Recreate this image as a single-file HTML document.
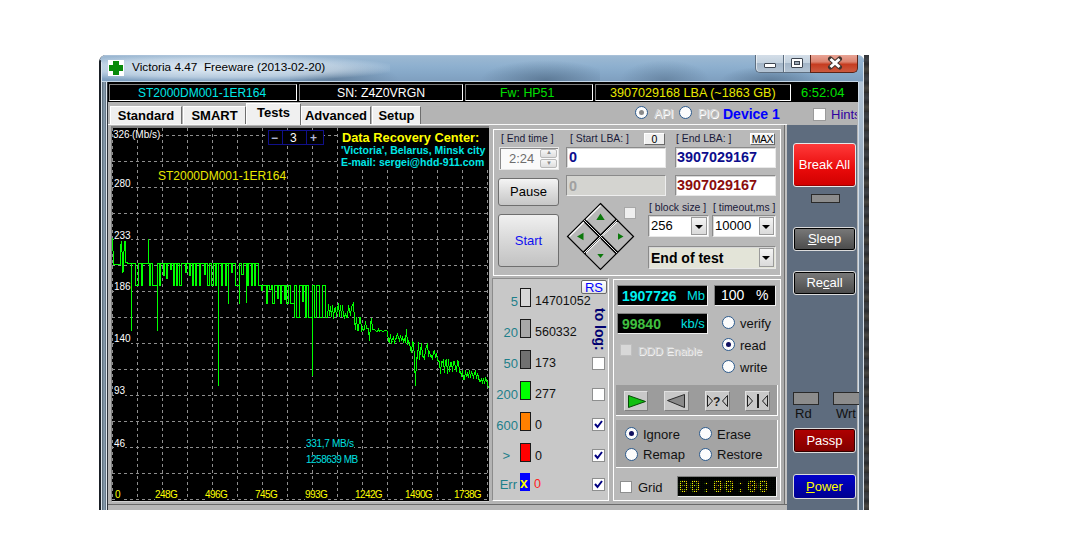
<!DOCTYPE html>
<html><head><meta charset="utf-8">
<style>
*{box-sizing:border-box}
html,body{margin:0;padding:0}
body{width:1069px;height:556px;overflow:hidden;background:#fff;position:relative;font-family:"Liberation Sans",sans-serif}
.a{position:absolute}
.t{position:absolute;white-space:pre;line-height:1}
/* window frame */
#frame{left:99px;top:55px;width:765px;height:455px;background:linear-gradient(90deg,#c8d8e6,#a0bad2);border-radius:7px 7px 0 0;border-left:1px solid #1d2630}
#title{left:100px;top:55px;width:764px;height:26px;background:linear-gradient(180deg,#9cb8d2 0%,#8eb0cf 40%,#86a8c8 70%,#7f9fbf 100%);border-radius:6px 6px 0 0;border-top:1px solid #a8c0d8}
#client{left:108px;top:82px;width:750px;height:428px;background:#b4b4b4}
.box3d{border-top:1px solid #808080;border-left:1px solid #808080;border-right:1px solid #fff;border-bottom:1px solid #fff}
.sunk{border-top:1px solid #808080;border-left:1px solid #808080;border-right:1px solid #fff;border-bottom:1px solid #fff}
.raised{border-top:1px solid #fff;border-left:1px solid #fff;border-right:1px solid #808080;border-bottom:1px solid #808080}
.tab{position:absolute;top:106px;height:18px;background:#efefef;border-top:1px solid #fff;border-left:1px solid #fff;border-right:1px solid #6e6e6e;font:bold 13px "Liberation Sans",sans-serif;color:#000;text-align:center;line-height:17px}
.btn{position:absolute;background:linear-gradient(180deg,#f2f2f2,#d9d9d9 50%,#c8c8c8);border:1px solid #707070;border-radius:3px;text-align:center;font-family:"Liberation Sans",sans-serif}
.inp{position:absolute;background:#fff;border-top:1px solid #8a8a8a;border-left:1px solid #8a8a8a;border-right:1px solid #e8e8e8;border-bottom:1px solid #e8e8e8;box-shadow:inset 1px 1px 0 #d8d8d8}
.radio{position:absolute;width:13px;height:13px;border-radius:50%;border:1.5px solid #2c5a8c;background:#fcfcfc}
.chk{position:absolute;width:13px;height:13px;background:#fff;border:1px solid #8e8f8f}
.sw{position:absolute;width:11px;height:19px;border:1px solid #1a1a1a}
.lbl{position:absolute;white-space:pre;line-height:1;font-size:13px;color:#1e7f8a;text-align:right}
.val{position:absolute;white-space:pre;line-height:1;font-size:12.5px;color:#111}
</style></head><body>

<div id="frame" class="a"></div>
<div id="title" class="a"></div>
<!-- desktop smudges on glass -->
<div class="a" style="left:290px;top:62px;width:110px;height:20px;background:radial-gradient(ellipse at 40% 90%,rgba(70,95,120,.45),rgba(70,95,120,0) 70%)"></div>
<div class="a" style="left:480px;top:60px;width:120px;height:22px;background:radial-gradient(ellipse at 55% 90%,rgba(60,85,110,.5),rgba(60,85,110,0) 70%)"></div>
<div class="a" style="left:620px;top:60px;width:90px;height:22px;background:radial-gradient(ellipse at 50% 90%,rgba(70,95,120,.4),rgba(70,95,120,0) 70%)"></div>
<div class="a" style="left:720px;top:66px;width:100px;height:16px;background:radial-gradient(ellipse at 50% 90%,rgba(60,85,110,.45),rgba(60,85,110,0) 70%)"></div>
<div class="a" style="left:100px;top:55px;width:290px;height:26px;background:radial-gradient(ellipse at 40% 50%,rgba(235,242,248,.9),rgba(235,242,248,.5) 50%,rgba(235,242,248,0) 75%)"></div>
<!-- right frame -->
<div class="a" style="left:864px;top:55px;width:5px;height:455px;background:repeating-linear-gradient(180deg,#33363a 0,#404347 5px,#2a2c2f 9px,#4a4843 14px,#2e2e2e 19px)"></div>
<div class="a" style="left:857px;top:82px;width:1px;height:428px;background:#4a5868"></div>
<div class="a" style="left:858px;top:82px;width:1px;height:428px;background:#d0dce8"></div>
<div class="a" style="left:859px;top:82px;width:4px;height:428px;background:linear-gradient(180deg,#b4c6d8 0%,#8a9eb2 30%,#5e7084 55%,#5a6c7e 100%)"></div>
<div class="a" style="left:863px;top:62px;width:1px;height:448px;background:#d8e2ec"></div>
<!-- left frame inner -->
<div class="a" style="left:99px;top:60px;width:2px;height:450px;background:#1a1f26;border-radius:3px 0 0 0"></div>
<div class="a" style="left:101px;top:62px;width:1px;height:448px;background:#dde6ee"></div>
<div class="a" style="left:102px;top:82px;width:4px;height:428px;background:linear-gradient(90deg,#52626f,#8ea3b6 55%,#5a6b7a)"></div>
<div class="a" style="left:106px;top:82px;width:1px;height:428px;background:#e2e9f0"></div>
<div class="a" style="left:107px;top:81px;width:1px;height:429px;background:#2b3038"></div>
<div class="a" style="left:102px;top:81px;width:756px;height:1px;background:#c4d6e6"></div>

<!-- icon -->
<div class="a" style="left:108px;top:60px;width:16px;height:16px;background:#fff"></div>
<div class="a" style="left:113px;top:61px;width:6px;height:14px;background:#0a8a0a"></div>
<div class="a" style="left:109px;top:65px;width:14px;height:6px;background:#0a8a0a"></div>
<div class="a" style="left:113px;top:65px;width:6px;height:6px;background:#0a8a0a"></div>
<div class="t" style="left:132px;top:62px;font-size:11.8px;color:#000">Victoria 4.47  Freeware (2013-02-20)</div>

<!-- caption buttons -->
<div class="a" style="left:755px;top:55px;width:29px;height:18px;border:1px solid #5d6e80;border-top:none;border-right:none;border-radius:0 0 0 5px;background:linear-gradient(180deg,#d4dee8 0%,#c4d2df 45%,#a4b6c8 50%,#b4c4d4 100%);box-shadow:inset 1px 0 0 rgba(255,255,255,.6)"></div>
<div class="a" style="left:764px;top:63px;width:12px;height:5px;background:#fff;border:1px solid #3d4550;border-radius:1px"></div>
<div class="a" style="left:783px;top:55px;width:27px;height:18px;border-left:1px solid #5d6e80;border-bottom:1px solid #5d6e80;background:linear-gradient(180deg,#d4dee8 0%,#c4d2df 45%,#a4b6c8 50%,#b4c4d4 100%);box-shadow:inset 1px 0 0 rgba(255,255,255,.6)"></div>
<div class="a" style="left:791px;top:58px;width:12px;height:10px;border:1px solid #3d4550;background:#fff;border-radius:1px"></div>
<div class="a" style="left:794px;top:61px;width:6px;height:4px;border:1px solid #3d4550;background:#9aa6b2"></div>
<div class="a" style="left:810px;top:55px;width:48px;height:18px;border:1px solid #5a2418;border-top:none;border-radius:0 0 5px 0;background:linear-gradient(180deg,#e8a496 0%,#dc8470 40%,#c63c20 55%,#cc5a40 100%)"></div>
<svg class="a" style="left:826px;top:56px" width="18" height="14"><path d="M4.5,3 L13.5,11 M13.5,3 L4.5,11" stroke="#40332e" stroke-width="5" stroke-linecap="round"/><path d="M4.5,3 L13.5,11 M13.5,3 L4.5,11" stroke="#fff" stroke-width="3" stroke-linecap="butt"/></svg>

<!-- client -->
<div id="client" class="a"></div>
<!-- info bar -->
<div class="a" style="left:108px;top:82px;width:750px;height:20px;background:#000"></div>
<div class="a sunk" style="left:109px;top:84px;width:188px;height:17px;background:#000"></div>
<div class="a sunk" style="left:299px;top:84px;width:164px;height:17px;background:#000"></div>
<div class="a sunk" style="left:465px;top:84px;width:128px;height:17px;background:#000"></div>
<div class="a sunk" style="left:595px;top:84px;width:196px;height:17px;background:#000"></div>
<div class="t" style="left:138px;top:87px;font-size:12px;color:#00e8e8">ST2000DM001-1ER164</div>
<div class="t" style="left:337px;top:87px;font-size:12.3px;color:#fff">SN: Z4Z0VRGN</div>
<div class="t" style="left:500px;top:87px;font-size:12.4px;color:#00e000">Fw: HP51</div>
<div class="t" style="left:610px;top:87px;font-size:12.6px;color:#e8e800">3907029168 LBA (~1863 GB)</div>
<div class="t" style="left:801px;top:86px;font-size:13px;color:#00e000">6:52:04</div>

<!-- tab strip area -->
<div class="a" style="left:108px;top:102px;width:750px;height:23px;background:#b4b4b4"></div>
<div class="a" style="left:108px;top:124px;width:679px;height:1px;background:#f8f8f8"></div><div class="a" style="left:421px;top:125px;width:366px;height:1px;background:#d4d4d4"></div>
<div class="tab" style="left:110px;width:72px">Standard</div>
<div class="tab" style="left:183px;width:63px">SMART</div>
<div class="tab" style="left:246px;top:103px;height:22px;width:55px;background:#f0f0f0;line-height:18px">Tests</div>
<div class="tab" style="left:301px;width:70px">Advanced</div>
<div class="tab" style="left:372px;width:49px">Setup</div>

<div class="radio" style="left:635px;top:106px"><div class="a" style="left:3px;top:3px;width:5px;height:5px;border-radius:50%;background:#8a8a8a"></div></div>
<div class="t" style="left:654px;top:108px;font-size:12px;color:#d8d8d8;text-shadow:1px 1px 0 #fff">API</div>
<div class="radio" style="left:679px;top:106px"></div>
<div class="t" style="left:698px;top:108px;font-size:12px;color:#d8d8d8;text-shadow:1px 1px 0 #fff">PIO</div>
<div class="t" style="left:723px;top:106px;font:bold 14px 'Liberation Sans';color:#0000ff">Device 1</div>
<div class="chk" style="left:813px;top:108px;width:13px;height:13px;border:1px solid #9a9a9a"></div>
<div class="a" style="left:831px;top:104px;width:26px;height:20px;overflow:hidden"><div class="t" style="left:0;top:4px;font-size:13px;color:#3000a0">Hints</div></div>
<div class="a" style="left:858px;top:82px;width:11px;height:428px;background:transparent"></div>

<!-- graph -->
<div class="a" style="left:108px;top:125px;width:385px;height:385px;background:#b4b4b4"></div>
<div class="a" style="left:111px;top:126px;width:379px;height:376px;border-top:2px solid #808080;border-left:1px solid #808080;border-right:1px solid #fff;border-bottom:1px solid #d0d0d0;background:#000"></div>
<svg class="a" style="left:0;top:0" width="1069" height="556" shape-rendering="crispEdges">
<g stroke="#8e8e8e" stroke-width="1" stroke-dasharray="3 3">
<line x1="112.5" y1="128" x2="112.5" y2="500"/>
<line x1="137.5" y1="128" x2="137.5" y2="500"/>
<line x1="162.5" y1="128" x2="162.5" y2="500"/>
<line x1="187.5" y1="128" x2="187.5" y2="500"/>
<line x1="212.5" y1="128" x2="212.5" y2="500"/>
<line x1="237.5" y1="128" x2="237.5" y2="500"/>
<line x1="262.5" y1="128" x2="262.5" y2="500"/>
<line x1="287.5" y1="128" x2="287.5" y2="500"/>
<line x1="312.5" y1="128" x2="312.5" y2="500"/>
<line x1="337.5" y1="128" x2="337.5" y2="500"/>
<line x1="362.5" y1="128" x2="362.5" y2="500"/>
<line x1="387.5" y1="128" x2="387.5" y2="500"/>
<line x1="412.5" y1="128" x2="412.5" y2="500"/>
<line x1="437.5" y1="128" x2="437.5" y2="500"/>
<line x1="462.5" y1="128" x2="462.5" y2="500"/>
<line x1="487.5" y1="128" x2="487.5" y2="500"/>
<line x1="112" y1="135.5" x2="489" y2="135.5"/>
<line x1="112" y1="161.5" x2="489" y2="161.5"/>
<line x1="112" y1="187.5" x2="489" y2="187.5"/>
<line x1="112" y1="213.5" x2="489" y2="213.5"/>
<line x1="112" y1="239.5" x2="489" y2="239.5"/>
<line x1="112" y1="265.5" x2="489" y2="265.5"/>
<line x1="112" y1="291.5" x2="489" y2="291.5"/>
<line x1="112" y1="317.5" x2="489" y2="317.5"/>
<line x1="112" y1="343.5" x2="489" y2="343.5"/>
<line x1="112" y1="369.5" x2="489" y2="369.5"/>
<line x1="112" y1="395.5" x2="489" y2="395.5"/>
<line x1="112" y1="421.5" x2="489" y2="421.5"/>
<line x1="112" y1="447.5" x2="489" y2="447.5"/>
<line x1="112" y1="473.5" x2="489" y2="473.5"/>
<line x1="112" y1="499.5" x2="489" y2="499.5"/>
</g>
</svg>
<svg class="a" style="left:0;top:0" width="1069" height="556">
<path fill="none" stroke="#00ff00" stroke-width="1" shape-rendering="crispEdges" d="M112.5,237.5 V250.5 L113.5,251.5 V264.5 H120.5 V250.5 L121.5,237.5 V251.5 L122.5,252.5 V272.5 L123.5,271.5 V251.5 L124.5,250.5 V237.5 L125.5,238.5 V262.5 H127.5 V263.5 H130.5 H131.5 V330.5 V263.5 V263.5 H135.5 V285.5 H138.5 V263.5 H141.5 V285.5 H142.5 V263.5 H144.5 H148.5 V238.5 V263.5 V263.5 H149.5 V285.5 H150.5 V263.5 H152.5 V285.5 H154.5 H157.5 V330.5 V285.5 V263.5 H159.5 V285.5 H160.5 V263.5 H163.5 V275.5 H164.5 V263.5 H166.5 V278.5 H167.5 V263.5 H170.5 V269.5 H171.5 V263.5 H173.5 V285.5 H174.5 V263.5 H176.5 V285.5 H177.5 V263.5 H179.5 V285.5 H181.5 V263.5 H185.5 V272.5 H186.5 V263.5 H189.5 V275.5 H190.5 V263.5 H192.5 V285.5 H193.5 V263.5 H195.5 V285.5 H196.5 V263.5 H199.5 V285.5 H200.5 V263.5 H204.5 V274.5 H205.5 V263.5 H207.5 V285.5 H209.5 V263.5 H211.5 V285.5 H213.5 V263.5 H215.5 V285.5 H216.5 V263.5 H217.5 H218.5 V385.5 V263.5 V263.5 H221.5 V285.5 H222.5 V263.5 H225.5 V285.5 H226.5 V263.5 H227.5 H228.5 V303.5 V263.5 V263.5 H231.5 V272.5 H232.5 V263.5 H235.5 V285.5 H236.5 H239.5 V303.5 V285.5 V263.5 H241.5 V274.5 H243.5 V263.5 H245.5 H246.5 V302.5 V263.5 V263.5 H247.5 V285.5 H248.5 V263.5 H251.5 V285.5 H252.5 V263.5 H254.5 V285.5 H255.5 V263.5 H258.5 V285.5 H259.5 V285.5 H261.5 V290.5 H262.5 V285.5 H266.5 V303.5 H267.5 V285.5 H269.5 V289.5 H271.5 V285.5 H272.5 V303.5 H274.5 V285.5 H277.5 V298.5 H278.5 V285.5 H280.5 V303.5 H281.5 V285.5 H284.5 V299.5 H285.5 V285.5 H286.5 V303.5 H288.5 V285.5 H290.5 V303.5 H291.5 H294.5 V317.5 V303.5 V285.5 H296.5 V317.5 H299.5 V285.5 H302.5 V301.5 H303.5 V285.5 H305.5 V317.5 H306.5 V285.5 H308.5 V317.5 H309.5 H312.5 V375.5 V317.5 V285.5 H314.5 V317.5 H316.5 V285.5 H319.5 V317.5 H322.5 V285.5 H325.5 V317.5 H326.5 L327.5,317.5 L328.5,304.5 L329.5,315.5 L330.5,306.5 L331.5,316.5 L332.5,305.5 L333.5,318.5 L334.5,308.5 L335.5,307.5 L336.5,316.5 L337.5,308.5 L338.5,303.5 L339.5,316.5 L340.5,305.5 L341.5,316.5 L342.5,305.5 L343.5,315.5 L344.5,317.5 L345.5,313.5 L346.5,317.5 L347.5,317.5 L348.5,305.5 L349.5,310.5 L350.5,315.5 L351.5,306.5 L352.5,305.5 L353.5,303.5 L354.5,319.5 L355.5,329.5 L356.5,317.5 L357.5,330.5 L358.5,330.5 L359.5,317.5 L360.5,317.5 L361.5,330.5 L362.5,328.5 L363.5,330.5 L364.5,329.5 L365.5,321.5 L366.5,328.5 L367.5,328.5 L368.5,328.5 L369.5,340.5 L370.5,324.5 L371.5,318.5 L372.5,329.5 L373.5,329.5 L374.5,329.5 L375.5,330.5 L376.5,331.5 L377.5,331.5 L378.5,329.5 L379.5,331.5 L380.5,330.5 L381.5,330.5 L382.5,331.5 L383.5,331.5 L384.5,330.5 L385.5,330.5 L386.5,330.5 L387.5,331.5 L388.5,341.5 L389.5,342.5 L390.5,334.5 L391.5,342.5 L392.5,340.5 L393.5,336.5 L394.5,342.5 L395.5,340.5 L396.5,336.5 L397.5,334.5 L398.5,337.5 L399.5,340.5 L400.5,336.5 L401.5,339.5 L402.5,337.5 L403.5,341.5 L404.5,339.5 L405.5,341.5 L406.5,329.5 L407.5,343.5 L408.5,341.5 L409.5,343.5 L410.5,348.5 L411.5,352.5 L412.5,341.5 L413.5,342.5 L414.5,359.5 L415.5,385.5 L416.5,357.5 L417.5,358.5 L418.5,342.5 L419.5,359.5 L420.5,350.5 L421.5,343.5 L422.5,356.5 L423.5,356.5 L424.5,358.5 L425.5,349.5 L426.5,346.5 L427.5,343.5 L428.5,356.5 L429.5,351.5 L430.5,356.5 L431.5,355.5 L432.5,359.5 L433.5,351.5 L434.5,350.5 L435.5,357.5 L436.5,353.5 L437.5,360.5 L438.5,360.5 L439.5,362.5 L440.5,373.5 L441.5,361.5 L442.5,362.5 L443.5,360.5 L444.5,372.5 L445.5,360.5 L446.5,359.5 L447.5,373.5 L448.5,359.5 L449.5,371.5 L450.5,362.5 L451.5,362.5 L452.5,371.5 L453.5,361.5 L454.5,361.5 L455.5,367.5 L456.5,371.5 L457.5,360.5 L458.5,361.5 L459.5,372.5 L460.5,371.5 L461.5,376.5 L462.5,370.5 L463.5,379.5 L464.5,379.5 L465.5,370.5 L466.5,376.5 L467.5,373.5 L468.5,377.5 L469.5,370.5 L470.5,377.5 L471.5,371.5 L472.5,374.5 L473.5,377.5 L474.5,373.5 L475.5,371.5 L476.5,378.5 L477.5,373.5 L478.5,377.5 L479.5,381.5 L480.5,381.5 L481.5,379.5 L482.5,382.5 L483.5,378.5 L484.5,383.5 L485.5,378.5 L486.5,380.5 L487.5,382.5 L488.5,388.5"/>
</svg>
<!-- graph labels -->
<div class="t" style="left:113px;top:130px;font-size:10px;color:#fff;background:#000">326</div><div class="t" style="left:132px;top:130px;font-size:10px;color:#fff;background:#000">(Mb/s)</div>
<div class="t" style="left:114px;top:179px;font-size:10px;color:#fff;background:#000">280</div>
<div class="t" style="left:114px;top:231px;font-size:10px;color:#fff;background:#000">233</div>
<div class="t" style="left:114px;top:282px;font-size:10px;color:#fff;background:#000">186</div>
<div class="t" style="left:114px;top:334px;font-size:10px;color:#fff;background:#000">140</div>
<div class="t" style="left:114px;top:386px;font-size:10px;color:#fff;background:#000">93</div>
<div class="t" style="left:114px;top:439px;font-size:10px;color:#fff;background:#000">46</div>
<div class="t" style="left:115px;top:490px;font-size:10px;color:#ffff00;background:#000">0</div>
<div class="t" style="left:155px;top:490px;font-size:10px;color:#ffff00;background:#000;letter-spacing:-0.6px">248G</div>
<div class="t" style="left:205px;top:490px;font-size:10px;color:#ffff00;background:#000;letter-spacing:-0.6px">496G</div>
<div class="t" style="left:255px;top:490px;font-size:10px;color:#ffff00;background:#000;letter-spacing:-0.6px">745G</div>
<div class="t" style="left:305px;top:490px;font-size:10px;color:#ffff00;background:#000;letter-spacing:-0.6px">993G</div>
<div class="t" style="left:355px;top:490px;font-size:10px;color:#ffff00;background:#000;letter-spacing:-0.6px">1242G</div>
<div class="t" style="left:405px;top:490px;font-size:10px;color:#ffff00;background:#000;letter-spacing:-0.6px">1490G</div>
<div class="t" style="left:454px;top:490px;font-size:10px;color:#ffff00;background:#000;letter-spacing:-0.6px">1738G</div>
<div class="t" style="left:158px;top:170px;font-size:12px;color:#e8e800;background:#000">ST2000DM001-1ER164</div>
<div class="t" style="left:306px;top:439px;font-size:10px;color:#00e0e0;background:#000;letter-spacing:-0.3px">331,7 MB/s</div>
<div class="t" style="left:306px;top:455px;font-size:10px;color:#00e0e0;background:#000;letter-spacing:-0.5px">1258639 MB</div>
<!-- zoom control -->
<div class="a" style="left:268px;top:130px;width:56px;height:15px;border:1px solid #10108a;background:#000"></div>
<div class="a" style="left:282px;top:130px;width:1px;height:15px;background:#10108a"></div>
<div class="a" style="left:306px;top:130px;width:1px;height:15px;background:#10108a"></div>
<div class="t" style="left:271px;top:131px;font:bold 12px 'Liberation Sans';color:#b0b8d8">−</div>
<div class="t" style="left:290px;top:132px;font-size:12px;color:#fff">3</div>
<div class="t" style="left:310px;top:131px;font:bold 12px 'Liberation Sans';color:#b0b8d8">+</div>
<div class="a" style="left:338px;top:128px;width:150px;height:40px;background:#000"></div>
<div class="t" style="left:342px;top:130px;font:bold 12.8px 'Liberation Sans';color:#ffff00">Data Recovery Center:</div>
<div class="t" style="left:341px;top:144px;font:bold 10.5px 'Liberation Sans';color:#00e8e8">'Victoria', Belarus, Minsk city</div>
<div class="t" style="left:341px;top:156px;font:bold 10.5px 'Liberation Sans';color:#00e8e8">E-mail: sergei@hdd-911.com</div>

<!-- ===== middle panel ===== -->
<div class="a" style="left:489px;top:125px;width:298px;height:379px;background:#b4b4b4"></div>
<!-- top group -->
<div class="a" style="left:493px;top:129px;width:288px;height:146px;border-top:1px solid #fff;border-left:1px solid #fff;border-right:1px solid #fff;background:#b9b9b9"></div>
<div class="a" style="left:493px;top:275px;width:288px;height:1px;background:#fff"></div>
<div class="a" style="left:781px;top:125px;width:3px;height:379px;background:#ababab"></div>
<div class="a" style="left:784px;top:125px;width:1px;height:379px;background:#6e6e6e"></div>
<div class="a" style="left:785px;top:125px;width:2px;height:379px;background:#c0c0c0"></div>

<div class="t" style="left:501px;top:134px;font-size:10.4px;color:#1a1a3a">[ End time ]</div>
<div class="t" style="left:570px;top:134px;font-size:10.4px;color:#1a1a3a">[ Start LBA: ]</div>
<div class="a" style="left:644px;top:133px;width:21px;height:12px;background:#f0f0f0;border-top:1px solid #fff;border-left:1px solid #fff;border-right:1px solid #6a6a6a;border-bottom:1px solid #6a6a6a;font-size:10.5px;line-height:10px;text-align:center;color:#000">0</div>
<div class="t" style="left:676px;top:134px;font-size:10.4px;color:#1a1a3a">[ End LBA: ]</div>
<div class="a" style="left:750px;top:133px;width:25px;height:12px;background:#f4f4f4;border-top:1px solid #fff;border-left:1px solid #fff;border-right:1px solid #6a6a6a;border-bottom:1px solid #6a6a6a;font-size:10.5px;line-height:10px;text-align:center;color:#000;letter-spacing:-0.5px;white-space:pre;overflow:hidden">MAX</div>

<!-- end time spin -->
<div class="a" style="left:499px;top:147px;width:60px;height:23px;background:#fafafa;border:1px solid #e6e6e6;box-shadow:inset 1px 1px 0 #8a8a8a"></div>
<div class="t" style="left:509px;top:152px;font-size:13px;color:#6d6d6d">2:24</div>
<div class="a" style="left:540px;top:149px;width:17px;height:9px;background:linear-gradient(#f6f6f6,#dedede);border:1px solid #b8b8b8;border-radius:2px"></div>
<div class="a" style="left:540px;top:159px;width:17px;height:9px;background:linear-gradient(#f6f6f6,#dedede);border:1px solid #b8b8b8;border-radius:2px"></div>
<div class="t" style="left:546px;top:149px;font-size:6px;color:#8a8a8a">▲</div>
<div class="t" style="left:546px;top:160px;font-size:6px;color:#8a8a8a">▼</div>

<!-- LBA inputs -->
<div class="inp" style="left:566px;top:147px;width:100px;height:21px"></div>
<div class="t" style="left:569px;top:149px;font:bold 14.4px 'Liberation Sans';color:#0c0c8c">0</div>
<div class="inp" style="left:675px;top:147px;width:101px;height:21px"></div>
<div class="t" style="left:677px;top:149px;font:bold 14.4px 'Liberation Sans';color:#0c0c8c">3907029167</div>
<div class="a" style="left:566px;top:175px;width:100px;height:21px;background:#d4d4d0;border-top:1px solid #8a8a8a;border-left:1px solid #8a8a8a;border-right:1px solid #eee;border-bottom:1px solid #eee"></div>
<div class="t" style="left:569px;top:178px;font:bold 14.4px 'Liberation Sans';color:#a0a0a0">0</div>
<div class="inp" style="left:675px;top:175px;width:101px;height:21px"></div>
<div class="t" style="left:677px;top:177px;font:bold 14.4px 'Liberation Sans';color:#8a0c0c">3907029167</div>

<!-- pause / start -->
<div class="btn" style="left:498px;top:178px;width:61px;height:28px;border-color:#6e6e6e;background:linear-gradient(180deg,#f4f4f4,#dcdcdc 50%,#c6c6c6);font-size:13px;line-height:26px;color:#000">Pause</div>
<div class="btn" style="left:498px;top:214px;width:61px;height:53px;border-color:#6e6e6e;background:linear-gradient(180deg,#f0f0f0,#d8d8d8 50%,#c2c2c2);font-size:13px;line-height:51px;color:#1010f0">Start</div>

<!-- diamond -->
<svg class="a" style="left:566px;top:202px" width="70" height="70" viewBox="0 0 70 70" shape-rendering="geometricPrecision">
 <g transform="translate(34.5,34.5)">
  <path d="M0,-33 L33,0 L0,33 L-33,0 Z" fill="#b8b8b8" stroke="#000" stroke-width="1.2"/>
  <path d="M-16.5,-16.5 L16.5,16.5" stroke="#000" stroke-width="3.4"/>
  <path d="M16.5,-16.5 L-16.5,16.5" stroke="#000" stroke-width="3.4"/>
  <path d="M-16.5,-16.5 L16.5,16.5" stroke="#fff" stroke-width="0.9"/>
  <path d="M16.5,-16.5 L-16.5,16.5" stroke="#fff" stroke-width="0.9"/>
  <g stroke="#fff" stroke-width="1.1" fill="none">
   <path d="M-14.5,-16.5 L0,-31"/>
   <path d="M-31,0 L-16.5,-14.5"/>
   <path d="M2,-0.5 L16.5,-14.5"/>
   <path d="M-14.5,16.5 L0,2"/>
  </g>
  <path d="M0,-23 L-4.2,-16.5 L4.2,-16.5 Z" fill="#0a780a"/>
  <path d="M-23.5,0 L-17,-3.8 L-17,3.8 Z" fill="#0a780a"/>
  <path d="M23,0 L17.5,-3.2 L17.5,3.2 Z" fill="#0a780a"/>
  <path d="M0,21.5 L-3.2,17.5 L3.2,17.5 Z" fill="#0a780a"/>
 </g>
</svg>
<div class="a" style="left:624px;top:207px;width:12px;height:12px;background:#efefef;border:1px solid #a8a8a8"></div>

<div class="t" style="left:649px;top:203px;font-size:10.4px;color:#1a1a3a">[ block size ]</div>
<div class="t" style="left:713px;top:203px;font-size:10.4px;color:#1a1a3a">[ timeout,ms ]</div>
<div class="inp" style="left:648px;top:215px;width:61px;height:22px;background:#fff"></div>
<div class="t" style="left:651px;top:219px;font-size:13px;color:#000">256</div>
<div class="btn" style="left:691px;top:217px;width:16px;height:18px;border-radius:0;border-color:#9a9a9a;background:linear-gradient(#f4f4f4,#dadada)"></div>
<div class="a" style="left:695px;top:225px;width:0;height:0;border-left:4px solid transparent;border-right:4px solid transparent;border-top:4px solid #000"></div>
<div class="inp" style="left:712px;top:215px;width:64px;height:22px;background:#fff"></div>
<div class="t" style="left:715px;top:219px;font-size:13px;color:#000">10000</div>
<div class="btn" style="left:759px;top:217px;width:15px;height:18px;border-radius:0;border-color:#9a9a9a;background:linear-gradient(#f4f4f4,#dadada)"></div>
<div class="a" style="left:762px;top:225px;width:0;height:0;border-left:4px solid transparent;border-right:4px solid transparent;border-top:4px solid #000"></div>
<div class="inp" style="left:648px;top:246px;width:128px;height:23px;background:#e3e4d8"></div>
<div class="t" style="left:651px;top:250px;font:bold 14px 'Liberation Sans';color:#000">End of test</div>
<div class="btn" style="left:759px;top:248px;width:15px;height:19px;border-radius:0;border-color:#9a9a9a;background:linear-gradient(#f4f4f4,#dadada)"></div>
<div class="a" style="left:762px;top:256px;width:0;height:0;border-left:4px solid transparent;border-right:4px solid transparent;border-top:4px solid #000"></div>

<!-- lower-left counters group -->
<div class="a" style="left:492px;top:278px;width:117px;height:223px;border-top:1px solid #8c8c8c;border-left:1px solid #8c8c8c;border-right:1px solid #fff;border-bottom:1px solid #fff;background:#c8c8c8"></div>
<div class="btn" style="left:581px;top:280px;width:26px;height:14px;border-radius:2px;border-color:#6a6a6a;background:linear-gradient(#ffffff,#e4e4e4);font-size:13px;line-height:13px;color:#0000ff">RS</div>

<div class="lbl" style="left:500px;top:295px;width:18px">5</div>
<div class="sw" style="left:520px;top:288px;background:#d8d8d8"></div>
<div class="val" style="left:535px;top:295px">14701052</div>
<div class="lbl" style="left:500px;top:326px;width:18px">20</div>
<div class="sw" style="left:520px;top:319px;background:#a8a8a8"></div>
<div class="val" style="left:535px;top:326px">560332</div>
<div class="lbl" style="left:500px;top:357px;width:18px">50</div>
<div class="sw" style="left:520px;top:350px;background:#707070"></div>
<div class="val" style="left:535px;top:357px">173</div>
<div class="lbl" style="left:494px;top:388px;width:24px">200</div>
<div class="sw" style="left:520px;top:381px;background:#00ff00"></div>
<div class="val" style="left:535px;top:388px">277</div>
<div class="lbl" style="left:494px;top:419px;width:24px">600</div>
<div class="sw" style="left:520px;top:412px;background:#ff8000"></div>
<div class="val" style="left:535px;top:419px">0</div>
<div class="lbl" style="left:497px;top:449px;width:13px">&gt;</div>
<div class="sw" style="left:520px;top:443px;background:#ff0000"></div>
<div class="val" style="left:535px;top:450px">0</div>
<div class="lbl" style="left:496px;top:478px;width:21px">Err</div>
<div class="a" style="left:520px;top:473px;width:10px;height:18px;background:#0000ff"></div>
<div class="t" style="left:520px;top:475px;font:bold 14px 'Liberation Sans';color:#ffff00">x</div>
<div class="val" style="left:534px;top:478px;color:#ff2020">0</div>
<div class="t" style="left:592px;top:308px;font:bold 14px 'Liberation Sans';color:#000070;transform-origin:0 0;transform:translate(15.5px,0) rotate(90deg)">to log:</div>
<div class="chk" style="left:592px;top:357px;width:13px;height:13px"></div>
<div class="chk" style="left:592px;top:388px;width:13px;height:13px"></div>
<div class="chk" style="left:592px;top:418px;width:13px;height:13px"></div>
<div class="chk" style="left:592px;top:449px;width:13px;height:13px"></div>
<div class="chk" style="left:592px;top:478px;width:13px;height:13px"></div>
<svg class="a" style="left:592px;top:418px" width="13" height="73">
 <path d="M3,6 L5.5,9 L10,3" fill="none" stroke="#000080" stroke-width="2"/>
 <path d="M3,37 L5.5,40 L10,34" fill="none" stroke="#000080" stroke-width="2"/>
 <path d="M3,66 L5.5,69 L10,63" fill="none" stroke="#000080" stroke-width="2"/>
</svg>

<!-- lower-right group -->
<div class="a" style="left:613px;top:279px;width:168px;height:222px;border:1px solid #fff;background:#b9b9b9"></div>
<div class="a" style="left:617px;top:285px;width:91px;height:21px;background:#000;border-top:1px solid #808080;border-left:1px solid #808080;border-right:1px solid #eee;border-bottom:1px solid #eee"></div>
<div class="t" style="left:622px;top:288px;font:bold 14px 'Liberation Sans';color:#00f0f0">1907726</div>
<div class="t" style="left:687px;top:289px;font-size:13px;color:#00e0e0">Mb</div>
<div class="a" style="left:714px;top:285px;width:62px;height:21px;background:#000;border-top:1px solid #808080;border-left:1px solid #808080;border-right:1px solid #eee;border-bottom:1px solid #eee"></div>
<div class="t" style="left:721px;top:288px;font-size:14px;color:#fff">100</div>
<div class="t" style="left:756px;top:288px;font-size:14px;color:#fff">%</div>
<div class="a" style="left:617px;top:313px;width:91px;height:21px;background:#000;border-top:1px solid #808080;border-left:1px solid #808080;border-right:1px solid #eee;border-bottom:1px solid #eee"></div>
<div class="t" style="left:622px;top:316px;font:bold 14px 'Liberation Sans';color:#40c040">99840</div>
<div class="t" style="left:681px;top:317px;font-size:13px;color:#00e0e0">kb/s</div>
<div class="a" style="left:620px;top:344px;width:12px;height:12px;background:#d8d8d8;border:1px solid #c0c0c0"></div>
<div class="t" style="left:638px;top:346px;font-size:11.5px;color:#d0d0d0;text-shadow:1px 1px 0 #f4f4f4">DDD Enable</div>
<div class="radio" style="left:722px;top:316px"></div>
<div class="t" style="left:740px;top:317px;font-size:13px;color:#111">verify</div>
<div class="radio" style="left:722px;top:338px"><div class="a" style="left:3px;top:3px;width:5px;height:5px;border-radius:50%;background:#101060"></div></div>
<div class="t" style="left:740px;top:339px;font-size:13px;color:#111">read</div>
<div class="radio" style="left:722px;top:360px"></div>
<div class="t" style="left:740px;top:361px;font-size:13px;color:#111">write</div>

<!-- buttons row -->
<div class="a" style="left:616px;top:385px;width:162px;height:31px;background:#9c9c9c;border-bottom:1px solid #fff;border-right:1px solid #fff"></div>
<div class="a" style="left:624px;top:391px;width:24px;height:20px;background:#c8c8c8;border:1px solid #e0e0e0;border-right-color:#808080;border-bottom-color:#808080"></div>
<div class="a" style="left:664px;top:391px;width:25px;height:20px;background:#c8c8c8;border:1px solid #e0e0e0;border-right-color:#808080;border-bottom-color:#808080"></div>
<div class="a" style="left:705px;top:391px;width:25px;height:20px;background:#c8c8c8;border:1px solid #e0e0e0;border-right-color:#808080;border-bottom-color:#808080"></div>
<div class="a" style="left:745px;top:391px;width:25px;height:20px;background:#c8c8c8;border:1px solid #e0e0e0;border-right-color:#808080;border-bottom-color:#808080"></div>
<svg class="a" style="left:616px;top:385px" width="162" height="31">
 <path d="M12.5,10.5 L29.5,16.5 L12.5,22.5 Z" fill="#10c010" stroke="#064a06" stroke-width="1"/>
 <path d="M51.5,15.5 L68.5,9.5 L68.5,22.5 Z" fill="#8a8a8a" stroke="#2a2a2a" stroke-width="1"/>
 <path d="M91.5,10.5 L96.5,16 L91.5,21.5 Z" fill="none" stroke="#202020"/>
 <path d="M111.5,10.5 L106.5,16 L111.5,21.5 Z" fill="none" stroke="#202020"/>
 <text x="97" y="21" font-family="Liberation Sans" font-weight="bold" font-size="12" fill="#202020">?</text>
 <path d="M131.5,10.5 L136.5,16 L131.5,21.5 Z" fill="none" stroke="#202020"/>
 <path d="M142,9 L142,23" stroke="#202020" stroke-width="2"/>
 <path d="M151.5,10.5 L146.5,16 L151.5,21.5 Z" fill="none" stroke="#202020"/>
</svg>

<!-- ignore/erase group -->
<div class="a" style="left:616px;top:420px;width:162px;height:48px;background:#a4a4a4;border-bottom:1px solid #fff;border-right:1px solid #fff"></div>
<div class="radio" style="left:625px;top:427px"><div class="a" style="left:3px;top:3px;width:5px;height:5px;border-radius:50%;background:#101060"></div></div>
<div class="t" style="left:643px;top:428px;font-size:13px;color:#111">Ignore</div>
<div class="radio" style="left:699px;top:427px"></div>
<div class="t" style="left:717px;top:428px;font-size:13px;color:#111">Erase</div>
<div class="radio" style="left:625px;top:448px"></div>
<div class="t" style="left:643px;top:448px;font-size:13px;color:#111">Remap</div>
<div class="radio" style="left:699px;top:448px"></div>
<div class="t" style="left:717px;top:448px;font-size:13px;color:#111">Restore</div>

<div class="chk" style="left:620px;top:481px;width:12px;height:12px"></div>
<div class="t" style="left:638px;top:481px;font-size:13px;color:#111">Grid</div>
<div class="a" style="left:677px;top:476px;width:100px;height:21px;background:#020a02;border-top:1px solid #808080;border-left:1px solid #808080;border-right:1px solid #eee;border-bottom:1px solid #eee"></div>
<div class="a" style="left:678px;top:477px;width:98px;height:18px;overflow:hidden"><div class="t" style="left:0px;top:0px;font:bold 18px 'Liberation Mono';color:#f0f000;letter-spacing:0.6px">00:00:00</div><div class="a" style="left:0;top:0;width:98px;height:18px;background:repeating-linear-gradient(90deg,rgba(0,0,0,0) 0,rgba(0,0,0,0) 1px,rgba(0,0,0,.9) 1px,rgba(0,0,0,.9) 2px),repeating-linear-gradient(180deg,rgba(0,0,0,0) 0,rgba(0,0,0,0) 1px,rgba(0,0,0,.9) 1px,rgba(0,0,0,.9) 2px)"></div></div>


<!-- ===== right panel ===== -->
<div class="a" style="left:787px;top:125px;width:70px;height:385px;background:#5e6c7e"></div>
<div class="a" style="left:793px;top:143px;width:63px;height:44px;border:1px solid #e8e8e8;border-radius:3px;background:linear-gradient(#ff3a3a,#e80a0a 60%,#d00000);box-shadow:inset 0 -1px 0 #900;color:#fff;font-size:13px;line-height:42px;text-align:center;white-space:pre">Break All</div>
<div class="a" style="left:811px;top:194px;width:29px;height:9px;border:1px solid #2a2a2a;background:#8c8c8c"></div>
<div class="a" style="left:793px;top:227px;width:63px;height:24px;border:1px solid #dcdcdc;border-radius:3px;background:linear-gradient(#7a7a7a,#4a4a4a);box-shadow:inset 0 0 0 1px #000;color:#fff;font-size:13px;line-height:22px;text-align:center;white-space:pre"><u>S</u>leep</div>
<div class="a" style="left:793px;top:271px;width:63px;height:24px;border:1px solid #dcdcdc;border-radius:3px;background:linear-gradient(#7a7a7a,#4a4a4a);box-shadow:inset 0 0 0 1px #000;color:#fff;font-size:13px;line-height:22px;text-align:center;white-space:pre">Re<u>c</u>all</div>
<div class="a" style="left:793px;top:392px;width:26px;height:13px;border:1px solid #2a2a2a;background:#8c8c8c"></div>
<div class="t" style="left:795px;top:407px;font-size:13px;color:#111">Rd</div>
<div class="a" style="left:833px;top:392px;width:26px;height:13px;border:1px solid #2a2a2a;border-right:none;background:#8c8c8c"></div>
<div class="t" style="left:836px;top:407px;font-size:13px;color:#111">Wrt</div>
<div class="a" style="left:793px;top:428px;width:63px;height:25px;border:1px solid #dcdcdc;border-radius:3px;background:linear-gradient(#b00000,#800000);box-shadow:inset 0 0 0 1px #300;color:#fff;font-size:13px;line-height:23px;text-align:center;white-space:pre">Passp</div>
<div class="a" style="left:793px;top:474px;width:63px;height:25px;border:1px solid #dcdcdc;border-radius:3px;color:#ffff00;font-size:13px;line-height:23px;text-align:center;white-space:pre;background:linear-gradient(#0000c8,#000090)"><u>P</u>ower</div>


<!-- bottom strip -->
<div class="a" style="left:108px;top:504px;width:679px;height:1px;background:#6a6a6a"></div>
<div class="a" style="left:108px;top:505px;width:679px;height:5px;background:#b8b8b8"></div>
</body></html>
